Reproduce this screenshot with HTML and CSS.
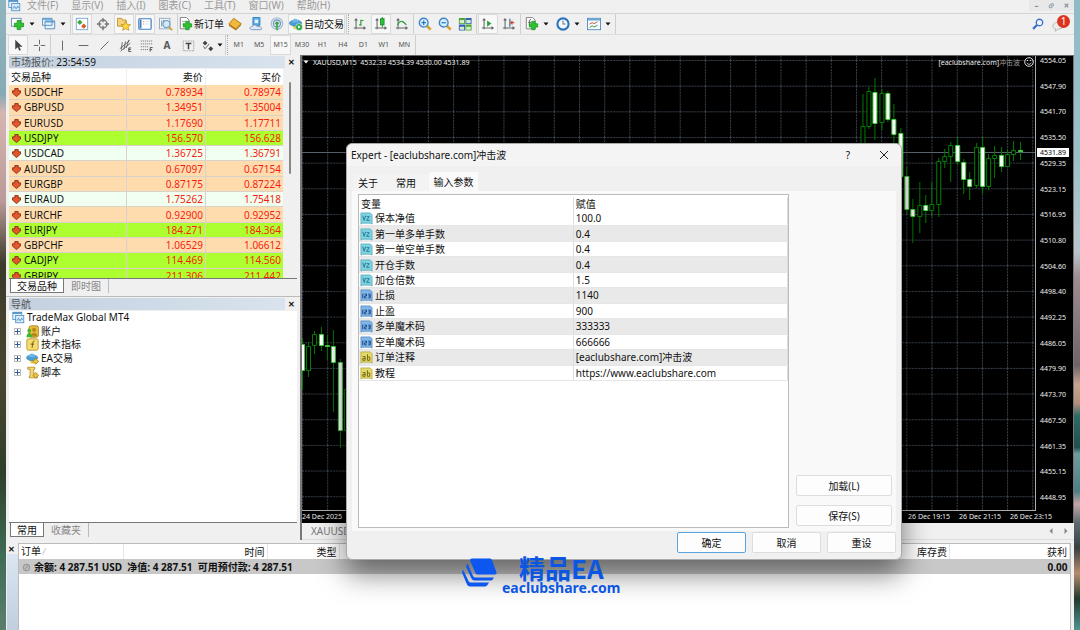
FILE: index.html
```html
<!DOCTYPE html>
<html lang="zh-CN">
<head>
  <meta charset="UTF-8" />
  <meta name="viewport" content="width=device-width, initial-scale=1.0"/>
  <title>TradeMax Global MT4</title>
  <link rel="stylesheet" href="styles.css">
</head>
<body>
  <!-- Shared icons -->
  <svg class="sprite" aria-hidden="true">
    <symbol id="i-windows" viewBox="0 0 16 16">
      <rect x="1" y="1.5" width="11" height="9" fill="#e8f3fb" stroke="#4a8fc7"/>
      <path d="M1 2.5h11" stroke="#4a8fc7" stroke-width="2"/>
      <rect x="4.500" y="5.500" width="10" height="9" fill="#d5e9f8" stroke="#4a8fc7"/>
      <path d="M6 12l2-3 2 3 2-3 1 2" fill="none" stroke="#3c84bd"/>
    </symbol>
    <symbol id="i-plus" viewBox="0 0 16 16">
      <path d="M5 1h5v4h4v5h-4v4H5v-4H1V5h4z" fill="#2fc32f" stroke="#0e8a16"/>
    </symbol>
    <symbol id="i-down" viewBox="0 0 8 8">
      <path d="M2.500 .5h3v2h2.100v2L4 7.600.4 4.500v-2h2.100z" fill="#e2572b" stroke="#8c2a12" stroke-width=".8"/>
    </symbol>
    <symbol id="i-zoom" viewBox="0 0 16 16">
      <path d="M10 10l4.500 4.500" stroke="#d9a02c" stroke-width="3"/>
      <circle cx="6.500" cy="6.500" r="5" fill="#d8ecfb" stroke="#3c86c9" stroke-width="1.600"/>
    </symbol>
    <symbol id="i-axes" viewBox="0 0 16 16">
      <path d="M3.500 2v12M1 12.500h13M2 4l1.500-2L5 4M12 11l2 1.500-2 1.500" fill="none" stroke="#666" stroke-width="1.200"/>
    </symbol>
    <symbol id="i-hat" viewBox="0 0 16 16">
      <path d="M4 9h7l-1 5H6z" fill="#e8c74a"/>
      <ellipse cx="7.500" cy="7" rx="7" ry="3.500" fill="#4c9fd6" stroke="#2d77a9" stroke-width=".6"/>
      <path d="M3.500 6C4 .5 10.500.5 11 6z" fill="#6cb8e6"/>
    </symbol>
    <symbol id="i-double" viewBox="0 0 14 14">
      <path d="M1 1h10l2 2v10l-2-1H3l-2 1z" fill="#7fd3e2" stroke="#4fa9bb" stroke-width=".8"/>
      <path d="M3 4l1.500 5L6 4M7 5h3L7 9h3.500" fill="none" stroke="#20788c"/>
    </symbol>
    <symbol id="i-int" viewBox="0 0 14 14">
      <path d="M1 1h10l2 2v10l-2-1H3l-2 1z" fill="#7fb5e8" stroke="#4d86bf" stroke-width=".8"/>
      <path d="M3 5v5M5 5.500h2v2H5v2h2M9 5.500h2v4H9M9 7.500h2" fill="none" stroke="#123f7c"/>
    </symbol>
    <symbol id="i-str" viewBox="0 0 14 14">
      <path d="M1 1h10l2 2v10l-2-1H3l-2 1z" fill="#e3d868" stroke="#b0a336" stroke-width=".8"/>
      <path d="M3 6h2.500v4H3V8h2.500M8 3.500V10h2.500V6.500H8" fill="none" stroke="#6d6210"/>
    </symbol>
    <symbol id="i-caret" viewBox="0 0 6 4">
      <path d="M.5.5h5L3 3.500z" fill="#111"/>
    </symbol>
  </svg>

  <div class="app">
    <nav class="menubar">
      <svg class="icon"><use href="#i-windows"/></svg>
      <a href="#">文件(F)</a>
      <a href="#">显示(V)</a>
      <a href="#">插入(I)</a>
      <a href="#">图表(C)</a>
      <a href="#">工具(T)</a>
      <a href="#">窗口(W)</a>
      <a href="#">帮助(H)</a>
      <div class="window-buttons">
        <button aria-label="最小化"><svg viewBox="0 0 8 8"><path d="M2 5h4" stroke="#777"/></svg></button>
        <button aria-label="还原"><svg viewBox="0 0 8 8"><path d="M1.500 3.500h3v3h-3zM3 2h3v3" fill="none" stroke="#8795a5"/></svg></button>
        <button aria-label="关闭"><svg viewBox="0 0 8 8"><path d="M2 2l4 4M6 2L2 6" stroke="#8795a5" stroke-width="1.500"/></svg></button>
      </div>
    </nav>

    <!-- Main toolbar -->
    <div class="toolbar">
      <div class="group">
        <button class="tool drop" aria-label="新图表">
          <svg viewBox="0 0 16 16"><rect x=".5" y="1.500" width="11" height="9" fill="#fff" stroke="#5d87ab"/><use href="#i-plus" x="3" y="3" width="13" height="13"/></svg>
          <svg class="caret"><use href="#i-caret"/></svg>
        </button>
        <button class="tool drop" aria-label="模板">
          <svg viewBox="0 0 16 16"><path d="M.5 1.500h11v8H.5zM3.500 4.500h11v9h-11z" fill="#e6f1fa" stroke="#4a88bd"/><path d="M1 2.500h10M4 5.500h10" stroke="#5a9bd2" stroke-width="1.500"/></svg>
          <svg class="caret"><use href="#i-caret"/></svg>
        </button>
      </div>
      <div class="group">
        <button class="tool on" aria-label="市场报价">
          <svg viewBox="0 0 16 16"><rect x="1.500" y="1.500" width="13" height="13" fill="#fff" stroke="#6fa5d0"/><path d="M5.500 3l3 3-3 3-3-3z" fill="#35a838"/><path d="M10 7.500l3 3-3 3-3-3z" fill="#e2572b"/></svg>
        </button>
        <button class="tool" aria-label="数据窗口">
          <svg viewBox="0 0 16 16"><circle cx="8" cy="8" r="4.500" fill="none" stroke="#777" stroke-width="1.600"/><path d="M8 1v5M8 10v5M1 8h5M10 8h5" stroke="#777" stroke-width="1.600"/></svg>
        </button>
        <button class="tool on" aria-label="导航">
          <svg viewBox="0 0 16 16"><path d="M.5 1.500h5l1 2h4v7H.5z" fill="#f3d27a" stroke="#b98d2c"/><path d="M10 5l1.600 3.400 3.900.4-2.900 2.500.9 3.900L10 13.300l-3.500 1.900.9-3.900-2.900-2.500 3.900-.4z" fill="#ffd83d" stroke="#b98713" stroke-width=".8"/></svg>
        </button>
        <button class="tool on" aria-label="终端">
          <svg viewBox="0 0 16 16"><rect x="1" y="2" width="14" height="12" rx="1" fill="#fff" stroke="#3f7fc0" stroke-width="1.400"/><path d="M2 3h2v10H2z" fill="#3f7fc0"/><path d="M6 5h1M6 8h1" stroke="#e2572b"/><path d="M8 5h5M8 8h5" stroke="#d8e2ec"/></svg>
        </button>
        <button class="tool" aria-label="策略测试">
          <svg viewBox="0 0 16 16"><rect x=".5" y="1.500" width="12" height="12" fill="#f4f8fb" stroke="#8aa6be"/><path d="M3 4v7M5 3v6" stroke="#6b8cab"/><path d="M11.500 11.500l3.500 3.500" stroke="#d9a02c" stroke-width="2.200"/><circle cx="8.500" cy="8" r="4" fill="#d5e8f6" stroke="#6d98bb" stroke-width="1.200"/></svg>
        </button>
      </div>
      <div class="group">
        <button class="tool wide">
          <svg viewBox="0 0 16 16"><path d="M1.500.5h7l3 3v10h-10z" fill="#fff" stroke="#777"/><path d="M3.500 5h5M3.500 8h4" stroke="#999"/><use href="#i-plus" x="4" y="4" width="12" height="12"/></svg>
          新订单
        </button>
        <button class="tool" aria-label="MetaEditor">
          <svg viewBox="0 0 16 16"><path d="M6.500 1.500l8.500 6-6 6-8-5.500z" fill="#f1b93a" stroke="#a87614"/><path d="M1 8l8 5.500 6-6v2l-6 6-8-5.500z" fill="#b17b17"/></svg>
        </button>
        <button class="tool" aria-label="账户">
          <svg viewBox="0 0 16 16"><path d="M4.500 .5h8v9h-8z" fill="#58aae6" stroke="#2e7cbd"/><path d="M6.500 3h4v4h-4z" fill="#e6f4fd"/><path d="M3 14.500c-3-.5-2-4 .5-3.500 1-2.500 5-2.500 6 0 4-1 7 3 3.500 3.500z" fill="#dfeaf6" stroke="#6d8fc0"/></svg>
        </button>
        <button class="tool" aria-label="信号">
          <svg viewBox="0 0 16 16"><circle cx="8" cy="7.500" r="6.500" fill="none" stroke="#a9bfd0" stroke-width="1.600"/><circle cx="8" cy="7.500" r="4" fill="none" stroke="#6b9fc4" stroke-width="1.600"/><circle cx="8" cy="7" r="2" fill="#3f9d4a"/><path d="M8 8v7" stroke="#3fb14a" stroke-width="2"/></svg>
        </button>
        <button class="tool wide on">
          <svg viewBox="0 0 16 16"><use href="#i-hat" width="16" height="16"/><circle cx="11.500" cy="11.500" r="4" fill="#27a844" stroke="#fff" stroke-width=".6"/><path d="M10.200 9.500l3.200 2-3.200 2z" fill="#fff"/></svg>
          自动交易
        </button>
      </div>
      <div class="group dotted">
        <button class="tool" aria-label="柱状图">
          <svg viewBox="0 0 16 16"><use href="#i-axes"/><path d="M9 3v7M9 4h3M7 9h2" stroke="#2ba036" stroke-width="1.400"/></svg>
        </button>
        <button class="tool on" aria-label="蜡烛图">
          <svg viewBox="0 0 16 16"><use href="#i-axes"/><path d="M9.500 0v12" stroke="#138a20"/><rect x="7.500" y="2" width="4" height="7" fill="#2dc53a" stroke="#138a20"/></svg>
        </button>
        <button class="tool" aria-label="折线图">
          <svg viewBox="0 0 16 16"><use href="#i-axes"/><path d="M3 9c3-6 6-5 10 0" fill="none" stroke="#2ba036" stroke-width="1.400"/></svg>
        </button>
      </div>
      <div class="group tight">
        <button class="tool" aria-label="放大">
          <svg viewBox="0 0 16 16"><use href="#i-zoom"/><path d="M4 6.500h5M6.500 4v5" stroke="#2b78bd" stroke-width="1.400"/></svg>
        </button>
        <button class="tool" aria-label="缩小">
          <svg viewBox="0 0 16 16"><use href="#i-zoom"/><path d="M4 6.500h5" stroke="#2b78bd" stroke-width="1.400"/></svg>
        </button>
        <button class="tool" aria-label="平铺窗口">
          <svg viewBox="0 0 16 16"><path d="M1 1h7v7H1zM8.500 8.500h7v7h-7z" fill="#4ca62b"/><path d="M8.500 1h7v7h-7zM1 8.500h7v7H1z" fill="#2f62b8"/><path d="M2 3.500h5V7H2zM9.500 3.500h5V7h-5zM2 11h5v3.500H2zM9.500 11h5v3.500h-5z" fill="#d9ecd0"/></svg>
        </button>
      </div>
      <div class="group">
        <button class="tool on" aria-label="自动滚动">
          <svg viewBox="0 0 16 16"><use href="#i-axes"/><path d="M7 4l5 3.500L7 11z" fill="#2ba036"/></svg>
        </button>
        <button class="tool" aria-label="图表平移">
          <svg viewBox="0 0 16 16"><use href="#i-axes"/><path d="M9 2v9" stroke="#3f6f9c" stroke-width="1.400"/><path d="M14 6.500h-4M12 4.500l-2 2 2 2" fill="none" stroke="#c9502c" stroke-width="1.400"/></svg>
        </button>
      </div>
      <div class="group">
        <button class="tool drop" aria-label="指标">
          <svg viewBox="0 0 16 16"><path d="M1.500.5h7l3 3v10h-10z" fill="#fff" stroke="#777"/><path d="M7 3c-2-1-2 1-2 7M3.500 6H7" fill="none" stroke="#555"/><use href="#i-plus" x="4" y="4" width="12" height="12"/></svg>
          <svg class="caret"><use href="#i-caret"/></svg>
        </button>
        <button class="tool drop" aria-label="周期">
          <svg viewBox="0 0 16 16"><circle cx="8" cy="8" r="6.400" fill="#f3f9fe" stroke="#2c73bd" stroke-width="2.400"/><path d="M8 4v4h3" fill="none" stroke="#777" stroke-width="1.200"/></svg>
          <svg class="caret"><use href="#i-caret"/></svg>
        </button>
        <button class="tool drop" aria-label="模板列表">
          <svg viewBox="0 0 16 16"><rect x=".5" y="1.500" width="15" height="13" fill="#f6fafd" stroke="#4a88bd"/><path d="M1 3h14" stroke="#6aa6d6" stroke-width="2"/><path d="M3 8l3-1.500 2 1 4-2" fill="none" stroke="#b44a2c"/><path d="M3 12l3-2 2 1.500 4-2" fill="none" stroke="#2f8a37"/></svg>
          <svg class="caret"><use href="#i-caret"/></svg>
        </button>
      </div>
      <div class="toolbar-end">
        <svg class="find" viewBox="0 0 16 16"><path d="M7 9l-5.500 5.500" stroke="#3a6fd0" stroke-width="3"/><circle cx="10" cy="6" r="4.300" fill="#eef4fd" stroke="#3a6fd0" stroke-width="1.800"/></svg>
        <div class="messages">
          <svg viewBox="0 0 16 16"><path d="M8 3c9 0 9 9 1 9l-5 3 1-3C-1 11 0 3 8 3z" fill="#ececec" stroke="#aaa"/></svg>
          <span class="badge">1</span>
        </div>
      </div>
    </div>

    <!-- Drawing tools and periods -->
    <div class="toolbar lines">
      <div class="group">
        <button class="tool on" aria-label="光标"><svg viewBox="0 0 16 16"><path d="M4 1v12l3-3 2 4.500 2-1L9 9.500h4z" fill="#444"/></svg></button>
        <button class="tool" aria-label="十字准线"><svg viewBox="0 0 16 16"><path d="M8 1v5.500M8 9.500V15M1 8h5.500M9.500 8H15" stroke="#666" stroke-width="1.200"/></svg></button>
      </div>
      <div class="group">
        <button class="tool" aria-label="垂直线"><svg viewBox="0 0 16 16"><path d="M8 2v12" stroke="#666" stroke-width="1.200"/></svg></button>
        <button class="tool" aria-label="水平线"><svg viewBox="0 0 16 16"><path d="M2 8h12" stroke="#666" stroke-width="1.200"/></svg></button>
        <button class="tool" aria-label="趋势线"><svg viewBox="0 0 16 16"><path d="M3 13L13 3" stroke="#666" stroke-width="1.200"/></svg></button>
        <button class="tool" aria-label="通道"><svg viewBox="0 0 16 16"><path d="M1 12L13 2M2 15L14 5M4 4l-1 9M8 3L6 13M12 1L9 11" stroke="#555"/><path d="M15 11h-3v4.500h3M12 13h2.500" fill="none" stroke="#333"/></svg></button>
        <button class="tool" aria-label="斐波那契"><svg viewBox="0 0 16 16"><path d="M1 2.500h14M1 6h14M1 9.500h9M1 13h9" stroke="#666" stroke-dasharray="1.500 1"/><path d="M12.500 15.500v-5h3M12.500 13H15" fill="none" stroke="#333"/></svg></button>
        <button class="tool letter" aria-label="文字">A</button>
        <button class="tool" aria-label="文字标签"><svg viewBox="0 0 16 16"><rect x="1.500" y="2.500" width="13" height="12" fill="none" stroke="#777" stroke-dasharray="1 1"/><path d="M4.500 5.500h7M8 5.500v7" stroke="#444" stroke-width="1.800"/></svg></button>
        <button class="tool drop" aria-label="箭头">
          <svg viewBox="0 0 16 16"><path d="M5 2l3 3-3 3-3-3zM12 9l3 3-3 3-3-3z" fill="#444"/><path d="M3 9l2 3 5-6" fill="none" stroke="#666" stroke-width="1.200"/></svg>
          <svg class="caret"><use href="#i-caret"/></svg>
        </button>
      </div>
      <div class="group dotted periods">
        <button class="tool">M1</button>
        <button class="tool">M5</button>
        <button class="tool on">M15</button>
        <button class="tool">M30</button>
        <button class="tool">H1</button>
        <button class="tool">H4</button>
        <button class="tool">D1</button>
        <button class="tool">W1</button>
        <button class="tool">MN</button>
      </div>
    </div>

    <div class="workspace">
      <aside class="side">
        <section class="panel market">
          <header class="panel-title">
            <h2>市场报价: <b>23:54:59</b></h2>
            <button class="close" aria-label="关闭市场报价">✕</button>
          </header>
          <div class="quotes-box">
            <table class="quotes">
              <thead>
                <tr><th>交易品种</th><th>卖价</th><th>买价</th></tr>
              </thead>
              <tbody>
                <tr><td><svg><use href="#i-down"/></svg>USDCHF</td><td>0.78934</td><td>0.78974</td></tr>
                <tr><td><svg><use href="#i-down"/></svg>GBPUSD</td><td>1.34951</td><td>1.35004</td></tr>
                <tr><td><svg><use href="#i-down"/></svg>EURUSD</td><td>1.17690</td><td>1.17711</td></tr>
                <tr class="green"><td><svg><use href="#i-down"/></svg>USDJPY</td><td>156.570</td><td>156.628</td></tr>
                <tr class="mint"><td><svg><use href="#i-down"/></svg>USDCAD</td><td>1.36725</td><td>1.36791</td></tr>
                <tr><td><svg><use href="#i-down"/></svg>AUDUSD</td><td>0.67097</td><td>0.67154</td></tr>
                <tr><td><svg><use href="#i-down"/></svg>EURGBP</td><td>0.87175</td><td>0.87224</td></tr>
                <tr class="mint"><td><svg><use href="#i-down"/></svg>EURAUD</td><td>1.75262</td><td>1.75418</td></tr>
                <tr><td><svg><use href="#i-down"/></svg>EURCHF</td><td>0.92900</td><td>0.92952</td></tr>
                <tr class="green"><td><svg><use href="#i-down"/></svg>EURJPY</td><td>184.271</td><td>184.364</td></tr>
                <tr><td><svg><use href="#i-down"/></svg>GBPCHF</td><td>1.06529</td><td>1.06612</td></tr>
                <tr class="green"><td><svg><use href="#i-down"/></svg>CADJPY</td><td>114.469</td><td>114.560</td></tr>
                <tr class="green"><td><svg><use href="#i-down"/></svg>GBPJPY</td><td>211.306</td><td>211.442</td></tr>
              </tbody>
            </table>
            <div class="scrollbar"></div>
          </div>
          <div class="panel-tabs">
            <button class="active">交易品种</button>
            <button>即时图</button>
          </div>
        </section>

        <section class="panel navigator">
          <header class="panel-title">
            <h2>导航</h2>
            <button class="close" aria-label="关闭导航">✕</button>
          </header>
          <div class="tree-box">
            <ul class="tree">
              <li class="root"><svg class="icon"><use href="#i-windows"/></svg>TradeMax Global MT4</li>
              <li><span class="expand"></span><svg class="icon" viewBox="0 0 16 16"><rect x="3.500" y="1" width="12" height="14" rx="3" fill="#e8bf3c" stroke="#a37a16"/><circle cx="10" cy="6" r="2.500" fill="#b38a1c"/><path d="M6 14c0-6 8-6 8 0z" fill="#b38a1c"/><circle cx="4" cy="7" r="2.300" fill="#44b52f"/><path d="M.5 15c0-7 7-7 7 0z" fill="#44b52f"/></svg>账户</li>
              <li><span class="expand"></span><svg class="icon" viewBox="0 0 16 16"><rect x="1" y="1" width="14" height="14" rx="2" fill="#f5dc70" stroke="#b38e22"/><path d="M10.500 4c-2-1-2 1-3 8M5.500 7.500H10" fill="none" stroke="#6f5510" stroke-width="1.200"/></svg>技术指标</li>
              <li><span class="expand"></span><svg class="icon" viewBox="0 0 16 16"><use href="#i-hat" width="16" height="16"/><path d="M12 8l3.500 3.500L12 15l-3.500-3.500z" fill="#e9c53d" stroke="#a37a16"/></svg>EA交易</li>
              <li><span class="expand"></span><svg class="icon" viewBox="0 0 16 16"><path d="M2 1.500h9v2.500H9.500v8.500H14v2H4v-2h1V4H2z" fill="#f1d67b" stroke="#b38e22"/><path d="M12 8l3.500 3.500L12 15l-3.500-3.500z" fill="#e9c53d" stroke="#a37a16"/></svg>脚本</li>
            </ul>
          </div>
          <div class="panel-tabs">
            <button class="active">常用</button>
            <button>收藏夹</button>
          </div>
        </section>
      </aside>

      <main class="chart-area">
        <div class="chart">
          <div class="plot">
            <svg class="candles" viewBox="302 56 735 454" preserveAspectRatio="none">
              <defs>
                <pattern id="grid" x="302" y="60" width="25.250" height="25.660" patternUnits="userSpaceOnUse">
                  <path d="M0 .5h25.250M.5 0v25.660" fill="none" stroke="#3a434d" stroke-dasharray="2 1"/>
                </pattern>
              </defs>
              <rect x="302" y="56" width="735" height="454" fill="url(#grid)"/>
              <path d="M302 152.500h735" stroke="#59636d"/>
              <!-- wicks -->
              <path class="wick" d="M302.500 338v52M308.500 342v35M314.500 331v23M321.500 327v24M327.500 335v25M333.500 330v82M340.500 359v89
                M864.500 94v60M870.500 87v42M876.500 78v62M883.500 89v41M889.500 91v31M895.500 104v42M902.500 128v49M908.500 167v47M914.500 199v44M921.500 182v51M927.500 195v28M933.500 182v35M940.500 158v59M946.500 149v19M952.500 142v40M959.500 137v28M965.500 159v35M971.500 172v28M978.500 143v45M984.500 137v57M990.500 154v36M996.500 146v32M1003.500 147v25M1009.500 149v18M1015.500 141v20M1022.500 142v18"/>
              <!-- rising bars -->
              <path class="up" d="M306.500 346.500h4v24h-4zM312.500 334.500h4v11h-4zM344.500 389.500h4v41h-4z
                M862.500 126.500h4v30h-4zM868.500 91.500h4v35h-4zM881.500 93.500h4v29h-4zM919.500 205.500h4v11h-4zM931.500 204.500h4v6h-4zM938.500 161.500h4v43h-4zM944.500 156.500h4v5h-4zM950.500 145.500h4v11h-4zM976.500 147.500h4v38h-4zM988.500 158.500h4v28h-4zM994.500 155.500h4v3h-4zM1007.500 154.500h4v12h-4zM1013.500 150.500h4v4h-4z"/>
              <!-- falling bars -->
              <path class="fall" d="M300.500 344.500h4v26h-4zM319.500 334.500h4v11h-4zM325.500 345.500h4v1h-4zM331.500 346.500h4v16h-4zM338.500 362.500h4v68h-4z
                M874.500 92.500h4v31h-4zM887.500 93.500h4v26h-4zM893.500 119.500h4v15h-4zM900.500 133.500h4v43h-4zM906.500 176.500h4v33h-4zM912.500 209.500h4v7h-4zM925.500 205.500h4v5h-4zM957.500 145.500h4v16h-4zM963.500 162.500h4v17h-4zM969.500 179.500h4v7h-4zM982.500 147.500h4v39h-4zM1001.500 155.500h4v11h-4zM1020.500 150.500h4v1h-4z"/>
            </svg>
            <div class="chart-head">
              <svg class="caret" viewBox="0 0 6 4"><path d="M.5.5h5L3 3.500z" fill="#fff"/></svg>
              <span>XAUUSD,M15&nbsp; 4532.33 4534.39 4530.00 4531.89</span>
              <span class="expert">[eaclubshare.com]<i>冲击波</i></span>
              <svg class="smile" viewBox="0 0 10 10"><circle cx="5" cy="5" r="4.300" fill="none" stroke="#ddd"/><path d="M3.500 3v1M6.500 3v1M2.800 5.800c1 2 3.400 2 4.400 0" fill="none" stroke="#ddd"/></svg>
            </div>
          </div>
          <div class="prices">
            <span>4554.05</span><span>4547.90</span><span>4541.70</span><span>4535.50</span><span>4529.35</span><span>4523.15</span><span>4516.95</span><span>4510.80</span><span>4504.60</span><span>4498.40</span><span>4492.25</span><span>4486.05</span><span>4479.90</span><span>4473.70</span><span>4467.50</span><span>4461.35</span><span>4455.15</span><span>4448.95</span>
            <b class="current">4531.89</b>
          </div>
          <div class="dates">
            <span>24 Dec 2025</span>
            <span class="last">26 Dec 19:15</span><span>26 Dec 21:15</span><span>26 Dec 23:15</span>
          </div>
        </div>
        <div class="chart-tabs">
          <button>XAUUSD,M15</button>
          <div class="arrows"><svg viewBox="0 0 4 6"><path d="M3.500 0v6L.5 3z" fill="#888"/></svg><svg viewBox="0 0 4 6"><path d="M.5 0v6l3-3z" fill="#888"/></svg></div>
        </div>
      </main>
    </div>

    <section class="terminal">
      <div class="rail"><button class="close" aria-label="关闭终端">✕</button><div class="rail-bar"></div></div>
      <div class="orders-box">
        <table class="orders">
          <colgroup><col class="c-order"><col class="c-time"><col class="c-type"><col><col class="c-swap"><col class="c-profit"></colgroup>
          <thead>
            <tr><th>订单 <small>⁄</small></th><th>时间</th><th>类型</th><th></th><th>库存费</th><th>获利</th></tr>
          </thead>
          <tbody>
            <tr><td colspan="5"><svg viewBox="0 0 8 8"><circle cx="4" cy="4" r="2.800" fill="#bbb" stroke="#999"/><path d="M2.500 5.500l3-3" stroke="#999"/></svg>余额: 4 287.51 USD&nbsp; 净值: 4 287.51&nbsp; 可用预付款: 4 287.51</td><td>0.00</td></tr>
          </tbody>
        </table>
      </div>
    </section>
  </div>

  <!-- Expert inputs dialog -->
  <div class="dialog" role="dialog" aria-labelledby="dialogTitle">
    <header class="dialog-title">
      <h1 id="dialogTitle">Expert - [eaclubshare.com]冲击波</h1>
      <button aria-label="帮助">?</button>
      <button aria-label="关闭"><svg viewBox="0 0 10 10"><path d="M1 1l8 8M9 1L1 9" stroke="#222"/></svg></button>
    </header>
    <div class="dialog-tabs">
      <button>关于</button>
      <button>常用</button>
      <button class="active">输入参数</button>
    </div>
    <div class="dialog-page">
      <div class="inputs-box">
        <table class="inputs">
          <thead>
            <tr><th>变量</th><th>赋值</th></tr>
          </thead>
          <tbody>
            <tr><td><svg><use href="#i-double"/></svg>保本净值</td><td>100.0</td></tr>
            <tr><td><svg><use href="#i-double"/></svg>第一单多单手数</td><td>0.4</td></tr>
            <tr><td><svg><use href="#i-double"/></svg>第一单空单手数</td><td>0.4</td></tr>
            <tr><td><svg><use href="#i-double"/></svg>开仓手数</td><td>0.4</td></tr>
            <tr><td><svg><use href="#i-double"/></svg>加仓倍数</td><td>1.5</td></tr>
            <tr><td><svg><use href="#i-int"/></svg>止损</td><td>1140</td></tr>
            <tr><td><svg><use href="#i-int"/></svg>止盈</td><td>900</td></tr>
            <tr><td><svg><use href="#i-int"/></svg>多单魔术码</td><td>333333</td></tr>
            <tr><td><svg><use href="#i-int"/></svg>空单魔术码</td><td>666666</td></tr>
            <tr><td><svg><use href="#i-str"/></svg>订单注释</td><td>[eaclubshare.com]冲击波</td></tr>
            <tr><td><svg><use href="#i-str"/></svg>教程</td><td>https://www.eaclubshare.com</td></tr>
          </tbody>
        </table>
      </div>
      <div class="page-buttons">
        <button class="btn">加载(L)</button>
        <button class="btn">保存(S)</button>
      </div>
    </div>
    <footer class="dialog-footer">
      <button class="btn primary">确定</button>
      <button class="btn">取消</button>
      <button class="btn">重设</button>
    </footer>
  </div>

  <div class="watermark">
    <svg viewBox="0 0 36 31">
      <path d="M11 1h18q1.500 0 2 1.500L35.500 15q.5 2-1.500 2H17q-2 0-2.700-1.500L9 2.500Q9 1 11 1z"/>
      <path d="M6.500 6l5.500 12.500q.8 1.500 2.500 1.500H33q-1.500 3-3 3H13.500q-2 0-3-2L5 9z"/>
      <path d="M2 12l5.500 11.500q.8 1.500 2.500 1.500H28q-2 4-4 4H9q-2 0-3-2L1 15z"/>
    </svg>
    <div>
      <strong>精品EA</strong>
      <span>eaclubshare.com</span>
    </div>
  </div>
</body>
</html>
```
FILE: styles.css
```css
* {
  box-sizing: border-box;
}

body {
  margin: 0;
  height: 100vh;
  padding: 0 6px;
  overflow: hidden;
  font-family: "Noto Sans", "Noto Sans CJK SC", sans-serif;
  font-size: 10px;
  line-height: 14px;
  color: #111;
  background:
    linear-gradient(#8fbac6, #9bc0ca 25%, #b9c6cb 40%, #a08d92 44%, #6f6367 58%, #c7a48f 61%, #b5907d 64%, #2f6a66 66%, #20504e 71%, #6f9c9f 72%, #4d7f86 78%, #c5a5a8 80%, #5b6a70 83%, #3a4040 87%, #b58c70 91%, #20392c 95%, #4f9591) right / 6px 100% no-repeat,
    linear-gradient(#8fb5bf, #88aab5 15%, #d6b5b1 18%, #b99a98 32%, #3b3a2b 42%, #4a4630 60%, #2f3f2c 75%, #3f6b55 88%, #5b7f6e) left / 6px 100% no-repeat;
}

h1,
h2 {
  margin: 0;
  font-size: 10px;
  font-weight: normal;
}

button {
  padding: 0;
  border: none;
  background: none;
  font: inherit;
  color: inherit;
}

table {
  border-collapse: collapse;
  table-layout: fixed;
  width: 100%;
}

th {
  font-weight: normal;
}

.sprite {
  position: absolute;
  width: 0;
  height: 0;
}

.icon {
  width: 13px;
  height: 13px;
  flex: none;
}

.app {
  height: 100%;
  display: flex;
  flex-direction: column;
  background: #f0f0f0;
}

/* Menu */
.menubar {
  display: flex;
  align-items: center;
  gap: 13px;
  height: 14px;
  padding: 0 0 3px 2px;
  border-bottom: 1px solid #d4d4d4;
}

.menubar .icon {
  margin-right: -7px;
}

.menubar a {
  color: #999;
  text-decoration: none;
}

.window-buttons {
  display: flex;
  margin-left: auto;
}

.window-buttons button {
  display: flex;
  width: 15px;
  padding: 2px 4px;
  background: #e8e8e8;
}

/* Toolbars */
.toolbar {
  display: flex;
  align-items: stretch;
  height: 20px;
  padding-left: 2px;
}

.toolbar.lines {
  height: 21px;
  border-top: 1px solid #dcdcdc;
  color: #555;
  font-size: 7px;
}

.group {
  display: flex;
  gap: 1px;
  padding-right: 1px;
  margin-right: 1px;
  border-right: 1px solid #cfcfcf;
}

.group.tight {
  gap: 0;
}

.group.dotted {
  padding-left: 1px;
  border-left: 1px dotted #aaa;
}

.tool {
  display: flex;
  align-items: center;
  justify-content: center;
  width: 20px;
}

.tool svg {
  width: 14px;
  height: 14px;
  flex: none;
}

.tool.on {
  background: #f8f8f8;
  border: 1px solid #dadada;
}

.tool.drop {
  width: 30px;
  gap: 4px;
}

.tool.wide {
  width: auto;
  gap: 1px;
  padding: 0;
}

.tool.letter {
  font-size: 10px;
  font-weight: bold;
}

.tool .caret,
.chart-head .caret {
  width: 6px;
  height: 4px;
}

.lines .tool svg:not(.caret) {
  width: 13px;
  height: 13px;
}

.lines .drop {
  width: 25px;
  gap: 3px;
}

.periods {
  width: 189px;
}

.periods .tool {
  flex: 1;
}

.toolbar-end {
  display: flex;
  align-items: center;
  gap: 8px;
  margin-left: auto;
  padding-right: 4px;
}

.find {
  width: 12px;
  height: 12px;
}

.messages {
  position: relative;
  width: 18px;
  height: 16px;
}

.messages svg {
  width: 12px;
  height: 20px;
}

.badge {
  position: absolute;
  right: 0;
  top: -1px;
  width: 13px;
  height: 13px;
  border-radius: 50%;
  background: #dd3420;
  color: #fff;
  line-height: 13px;
  text-align: center;
}

/* Left panels */
.workspace {
  display: flex;
  height: 485px;
}

.side {
  display: flex;
  flex-direction: column;
  width: 296px;
  border-right: 2px solid #777;
}

.panel {
  display: flex;
  flex-direction: column;
  padding: 1px 3px 0 3px;
}

.market {
  height: 242px;
  border-bottom: 1px solid #bbb;
}

.navigator {
  flex: 1;
}

.panel-title {
  display: flex;
  height: 13px;
  padding-bottom: 1px;
}

.panel-title h2 {
  flex: 1;
  padding-left: 2px;
  background: linear-gradient(to right, #c3d0df, #d8e3ee);
  color: #555;
  line-height: 12px;
}

.panel-title b {
  font-weight: normal;
  color: #111;
}

.close {
  width: 12px;
  font-size: 8px;
  font-weight: bold;
  line-height: 12px;
}

.quotes-box {
  display: flex;
  align-items: flex-start;
  flex: 1;
  min-height: 0;
  overflow: hidden;
}

.quotes {
  width: auto;
  flex: 1;
  height: 215px;
}

.quotes th,
.quotes td {
  padding: 0 2px;
  border-right: 1px solid #d8d2c8;
  text-align: right;
  line-height: 14px;
}

.quotes th {
  height: 16px;
  background: #fff;
  border-color: #eee;
}

.quotes td {
  background: #ffdcae;
  border-bottom: 1px solid #d8d2c8;
  color: #f61d10;
}

.quotes .green td {
  background: #adff2f;
}

.quotes .mint td {
  background: #f0fff0;
}

.quotes th:first-child,
.quotes td:first-child {
  width: 43%;
  text-align: left;
  color: #111;
}

.quotes th:last-child,
.quotes td:last-child {
  border-right: none;
}

.quotes svg {
  width: 9px;
  height: 9px;
  margin: 0 3px 0 1px;
  vertical-align: -1px;
}

.scrollbar {
  width: 2px;
  height: 92px;
  margin: 13px 6px 0;
  border-radius: 1px;
  background: #888;
}

.panel-tabs {
  display: flex;
  height: 18px;
  border-top: 1px solid #777;
  padding-left: 1px;
}

.panel-tabs button {
  height: 14px;
  padding: 0 7px;
  border-right: 1px solid #bbb;
  color: #888;
}

.panel-tabs .active {
  padding: 0 6px;
  background: #fff;
  border: 1px solid #777;
  border-top: none;
  color: #111;
}

.tree-box {
  flex: 1;
  background: #fff;
}

.tree {
  display: grid;
  grid-auto-rows: 1fr;
  height: 68px;
  margin: 0;
  padding: 0;
  list-style: none;
  line-height: 13px;
}

.tree li {
  display: flex;
  align-items: center;
  gap: 2px;
  padding-left: 5px;
}

.tree .root {
  padding-left: 3px;
}

.expand {
  width: 7px;
  height: 7px;
  margin-right: 3px;
  border: 1px solid #bbb;
  background:
    linear-gradient(#345a9c, #345a9c) center / 5px 1px no-repeat,
    linear-gradient(#345a9c, #345a9c) center / 1px 5px no-repeat;
}

/* Chart */
.chart-area {
  display: flex;
  flex-direction: column;
  flex: 1;
  min-width: 0;
}

.chart {
  display: grid;
  grid-template: 455px 12px / 1fr 37px;
  border-top: 1px solid #666;
  border-right: 1px solid #777;
  background: #000;
  color: #eee;
  font-size: 7px;
  line-height: 9px;
}

.plot {
  display: grid;
  border-right: 1px solid #aaa;
  border-bottom: 1px solid #aaa;
}

.candles,
.chart-head {
  grid-area: 1 / 1;
}

.candles {
  width: 100%;
  height: 100%;
}

.candles .wick {
  stroke: #007a00;
}

.candles .up {
  fill: #000;
  stroke: #008000;
}

.candles .fall {
  fill: #fff;
  stroke: #3ccf3c;
}

.chart-head {
  display: flex;
  align-items: center;
  gap: 4px;
  height: 12px;
  padding: 0 1px;
}

.expert {
  margin-left: auto;
}

.expert i {
  font-style: normal;
  color: #999;
}

.smile {
  width: 10px;
  height: 10px;
}

.prices {
  position: relative;
  display: flex;
  flex-direction: column;
  justify-content: space-between;
  padding: 0 0 9px 4px;
}

.current {
  position: absolute;
  top: 92px;
  left: 1px;
  right: 4px;
  padding-left: 3px;
  background: #fff;
  color: #000;
  font-weight: normal;
}

.dates {
  grid-column: 1 / 3;
  display: flex;
  gap: 9px;
  padding-right: 21px;
  line-height: 12px;
}

.dates .last {
  margin-left: auto;
}

.chart-tabs {
  display: flex;
  flex: 1;
  align-items: center;
  justify-content: space-between;
  padding: 0 6px 0 9px;
  border-bottom: 1px solid #ddd;
  color: #777;
}

.arrows {
  display: flex;
  gap: 11px;
}

.arrows svg {
  width: 4px;
  height: 6px;
}

/* Terminal */
.terminal {
  display: flex;
  flex: 1;
  padding: 3px 3px 0 1px;
}

.rail {
  display: flex;
  flex-direction: column;
  width: 11px;
}

.rail .close {
  width: 9px;
  height: 11px;
}

.rail-bar {
  flex: 1;
  background: linear-gradient(#dbe6f2, #c0cede);
}

.orders-box {
  flex: 1;
  border: 1px solid #bbb;
  border-bottom: none;
  background: #fff;
}

.orders th,
.orders td {
  height: 15px;
  padding: 0 2px;
  text-align: right;
}

.orders th {
  border-right: 1px solid #e5e5e5;
}

.orders td {
  background: #c8c8c8;
  font-weight: bold;
}

.orders th:first-child,
.orders td:first-child {
  text-align: left;
}

.orders small {
  color: #aaa;
}

.orders svg {
  width: 9px;
  height: 9px;
  margin: 0 3px 0 1px;
  vertical-align: -1px;
}

.c-order {
  width: 104px;
}

.c-time {
  width: 144px;
}

.c-type {
  width: 72px;
}

.c-swap {
  width: 110px;
}

.c-profit {
  width: 120px;
}

/* Dialog */
.dialog {
  position: absolute;
  left: 346px;
  top: 143px;
  width: 556px;
  border: 1px solid #aaa;
  border-radius: 6px;
  background: #f0f0f0;
  box-shadow: 0 14px 28px rgba(0, 0, 0, 0.5);
}

.dialog-title {
  display: flex;
  align-items: center;
  height: 22px;
  padding: 0 11px 0 4px;
  border-radius: 6px 6px 0 0;
  background: #f4f4f4;
}

.dialog-title h1 {
  flex: 1;
}

.dialog-title button {
  width: 12px;
  margin-left: 24px;
}

.dialog-title button svg {
  display: block;
  width: 10px;
  height: 10px;
  margin: 0 auto;
}

.dialog-tabs {
  display: flex;
  align-items: flex-end;
  height: 25px;
  padding-left: 6px;
}

.dialog-tabs button {
  width: 38px;
  height: 17px;
  padding-right: 8px;
  background: #f3f3f3;
}

.dialog-tabs .active {
  width: 49px;
  height: 19px;
  padding: 0;
  background: #fafafa;
}

.dialog-page {
  display: flex;
  gap: 7px;
  margin: 0 5px;
  padding: 3px 4px 3px 6px;
  background: #f9f9f9;
}

.inputs-box {
  flex: 1;
  height: 334px;
  padding-top: 2px;
  border: 1px solid #bbb;
  background: #fff;
}

.inputs {
  height: 184px;
}

.inputs th,
.inputs td {
  padding: 0 2px;
  border-right: 1px solid #ddd;
  text-align: left;
  line-height: 14px;
}

.inputs td {
  border-bottom: 1px solid #e6e6e6;
}

.inputs tbody tr:nth-child(even) {
  background: #e9e9e9;
}

.inputs td:first-child {
  padding-left: 1px;
}

.inputs svg {
  width: 13px;
  height: 13px;
  margin-right: 2px;
  vertical-align: -3px;
}

.page-buttons {
  display: flex;
  flex-direction: column;
  justify-content: flex-end;
  gap: 9px;
  width: 96px;
  padding-bottom: 2px;
}

.btn {
  height: 21px;
  border: 1px solid #ddd;
  border-radius: 2px;
  background: #fdfdfd;
}

.dialog-footer {
  display: flex;
  justify-content: flex-end;
  gap: 6px;
  padding: 1px 5px 6px;
}

.dialog-footer .btn {
  width: 69px;
}

.dialog-footer .primary {
  border-color: #5aa5e0;
}

/* Logo */
.watermark {
  position: absolute;
  left: 461px;
  top: 555px;
  display: flex;
  gap: 5px;
  color: #0b57e3;
}

.watermark svg {
  width: 36px;
  height: 36px;
  fill: #0b57f0;
}

.watermark div {
  display: flex;
  flex-direction: column;
  align-items: center;
}

.watermark strong {
  font-family: "Noto Sans CJK SC", sans-serif;
  font-size: 26px;
  line-height: 25px;
}

.watermark span {
  font-size: 14px;
  font-weight: bold;
  line-height: 15px;
}
```
